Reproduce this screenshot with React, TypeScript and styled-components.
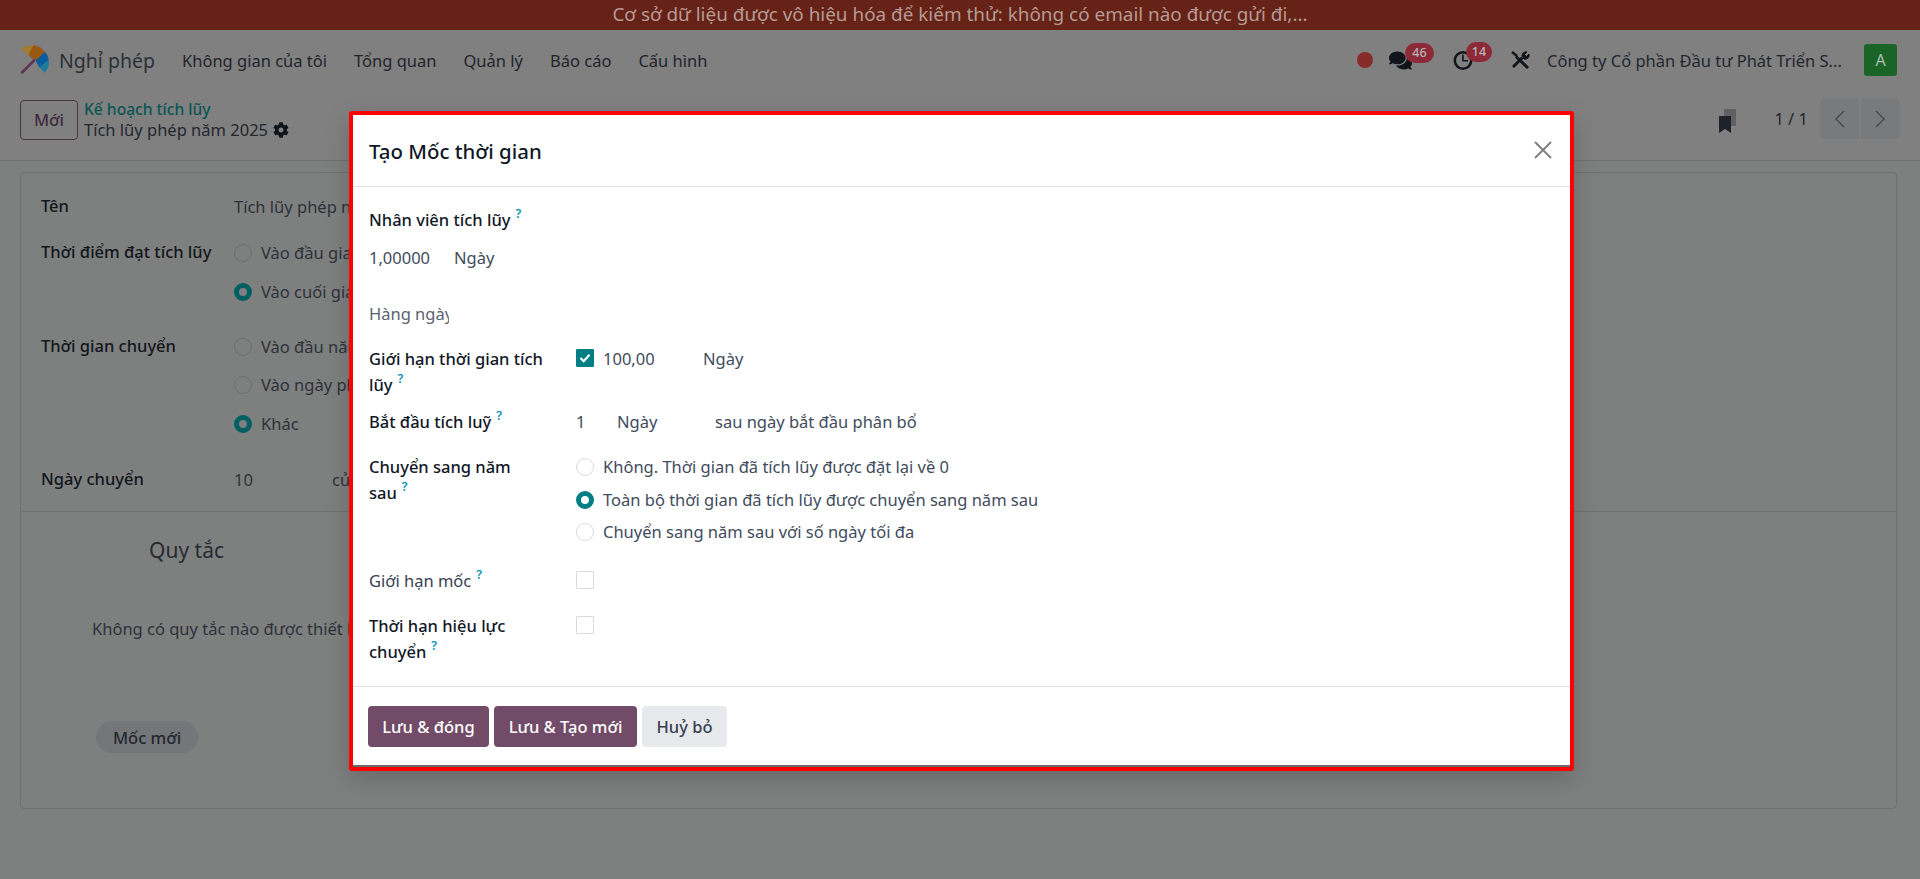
import React from "react";
import styled, { createGlobalStyle } from "styled-components";
import { FaComments, FaCog } from "react-icons/fa";

const Global = createGlobalStyle`
  html, body { margin: 0; padding: 0; height: 100%; overflow: hidden; }
  body { font-family: "Noto Sans", "Open Sans", sans-serif; font-size: 16.5px; background: #7e7f7f; color: #1f242b; }
  * { box-sizing: border-box; }
`;

const Page = styled.div`position: relative; width: 1920px; height: 879px; overflow: hidden;`;
const Banner = styled.div`
  height: 30px; background: #662216; color: #b59b93; font-size: 18.9px; line-height: 28px; text-align: center;
`;
const Navbar = styled.nav`display: flex; align-items: center; height: 60px; padding: 0 23px 0 20px; background: #808080;`;
const LogoSvg = styled.svg`width: 30px; height: 30px; flex: none; margin-bottom: 1px;`;
const Brand = styled.span`font-size: 19.5px; margin: 0 27px 0 9px; color: #2b3037;`;
const MenuItem = styled.span`margin-right: 27px; color: #1f242b;`;
const RightGroup = styled.div`display: flex; align-items: center; margin-left: auto;`;
const Dot = styled.span`width: 16px; height: 16px; border-radius: 50%; background: #872a2a;`;
const IconWrap = styled.span<{ $ml: number; $w: number }>`
  position: relative; display: flex; margin-left: ${(p) => p.$ml}px; width: ${(p) => p.$w}px; color: #10151c; font-size: ${(p) => p.$w}px;
`;
const Badge = styled.span<{ $left: number; $w: number; $top: number }>`
  position: absolute; top: ${(p) => p.$top}px; left: ${(p) => p.$left}px; width: ${(p) => p.$w}px; height: 20px; border-radius: 10px;
  background: #8c2a37; color: #b9b4b5; font-size: 12.5px; font-weight: 500; line-height: 20px; text-align: center;
`;
const Company = styled.span`margin-left: 17px; width: 294px; white-space: nowrap; color: #22272e;`;
const Avatar = styled.span`
  display: flex; align-items: center; justify-content: center; margin-left: 23px; width: 33px; height: 32px; border-radius: 3px;
  background: #1b6428; color: #b4bcb4; font-size: 16px;
`;

const ControlPanel = styled.div`
  display: flex; align-items: center; height: 71px; padding: 0 20px 11px; border-bottom: 1px solid #6e6f6f; background: #808080;
`;
const NewButton = styled.span`
  display: flex; align-items: center; justify-content: center; width: 58px; height: 40px; border: 1px solid #4c3548; border-radius: 4px; color: #3f2a3b; font-weight: 500;
`;
const Bread = styled.div`margin-left: 6px; display: flex; flex-direction: column;`;
const BreadLink = styled.span`font-size: 15.6px; font-weight: 500; line-height: 20px; color: #0a5554;`;
const BreadTitle = styled.span`display: flex; align-items: center; gap: 5px; font-size: 16.5px; line-height: 21px; color: #22272e; svg { color: #10151c; font-size: 16px; }`;
const Pager = styled.div`display: flex; align-items: center; margin: 0 0 2px auto;`;
const BookmarkSvg = styled.svg`width: 17px; height: 24px; margin: 4px 38px 0 0;`;
const PagerText = styled.span`margin-right: 12px; color: #20252c;`;
const PagerBtn = styled.span<{ $first?: boolean }>`
  display: flex; align-items: center; justify-content: center; width: 39px; height: 41px; background: #797a7c; margin-left: ${(p) => (p.$first ? 0 : 2)}px;
  border-radius: ${(p) => (p.$first ? "4px 0 0 4px" : "0 4px 4px 0")};
`;
const Sheet = styled.section`
  margin: 11px 23px 0 20px; height: 637px; border: 1px solid #707171; border-radius: 4px; padding-top: 21px;
`;
const SheetRow = styled.div<{ $top?: number }>`
  display: grid; grid-template-columns: 193px 1fr; padding-left: 20px; margin-top: ${(p) => p.$top || 0}px; line-height: 26px;
`;
const SheetLabel = styled.span`margin-top: -1px; font-weight: 500; color: #12161c;`;
const SheetValue = styled.span`color: #2d3239;`;
const OptionList = styled.div`display: flex; flex-direction: column; gap: 12.7px;`;
const Option = styled.label`display: flex; align-items: center; gap: 9px; color: inherit; white-space: nowrap;`;
const SheetOption = styled(Option)`color: #2d3239;`;
const Radio = styled.span<{ $on?: boolean; $dim?: boolean }>`
  flex: none; width: 18px; height: 18px; border-radius: 50%;
  background: ${(p) => (p.$on ? (p.$dim ? "#808080" : "#fff") : "transparent")};
  border: ${(p) => (p.$on ? `5.5px solid ${p.$dim ? "#005f60" : "#017e84"}` : `1px solid ${p.$dim ? "#6d6e6e" : "#d8dadd"}`)};
`;
const Value10 = styled.div`display: flex; color: #2d3239;`;
const Value10Num = styled.span`width: 98px;`;
const Divider = styled.hr`margin: 18px 0 0; border: 0; border-top: 1px solid #6e6f6f;`;
const RulesTitle = styled.h3`margin: 23px 0 0 128px; font-size: 21px; font-weight: 400; line-height: 30px; color: #262b32;`;
const EmptyText = styled.p`margin: 51px 0 0 71px; line-height: 26px; color: #2d3239; white-space: nowrap;`;
const PillButton = styled.span`
  display: inline-flex; align-items: center; justify-content: center; margin: 79px 0 0 75px; width: 102px; height: 32px; border-radius: 16px; background: #747679; color: #22272e; font-weight: 500;
`;

const Modal = styled.div`
  position: absolute; left: 349px; top: 111px; width: 1225px; height: 660px; border: 4px solid #ff0000; border-radius: 3px; background: #6a6a6a;
  box-shadow: 0 8px 24px rgba(0,0,0,.18);
`;
const ModalInner = styled.div`height: 650px; background: #fff; color: #414b5c;`;
const ModalHeader = styled.header`
  position: relative; display: flex; align-items: center; height: 72px; padding: 0 16px; border-bottom: 1px solid #dee2e6;
`;
const ModalTitle = styled.h4`margin: 0; font-size: 20.4px; font-weight: 500; color: #111827;`;
const CloseSvg = styled.svg`position: absolute; right: 18px; top: 26px; width: 18px; height: 18px;`;
const ModalBody = styled.div`padding: 20px 16px 0; height: 499px; line-height: 26px;`;
const Strong = styled.span`font-weight: 500; color: #111827;`;
const Light = styled.span`font-weight: 400; color: #374151;`;
const NoWrap = styled.span`white-space: nowrap;`;
const Hint = styled.sup`
  display: inline-block; margin-left: 5px; font-size: 12.5px; font-weight: 600; color: #0b94b8; line-height: 1; vertical-align: 8px;
`;
const Inline = styled.div<{ $top?: number }>`display: flex; margin-top: ${(p) => p.$top || 0}px;`;
const Fixed = styled.span<{ $w: number }>`width: ${(p) => p.$w}px; flex: none; white-space: nowrap;`;
const CheckValue = styled(Fixed)`margin-left: 9px;`;
const Clipped = styled.div`margin-top: 30px; width: 80px; height: 26px; overflow: hidden; white-space: nowrap; color: #5a6270;`;
const FormRow = styled.div<{ $top: number }>`display: grid; grid-template-columns: 207px 1fr; margin-top: ${(p) => p.$top}px;`;
const FormLabel = styled.div`width: 180px;`;
const Check = styled.span<{ $on?: boolean }>`
  flex: none; display: flex; align-items: center; justify-content: center; width: 18px; height: 18px; margin-top: 3px; border-radius: 1px;
  background: ${(p) => (p.$on ? "#017e84" : "#fff")}; border: 1px solid ${(p) => (p.$on ? "#017e84" : "#d8dadd")};
`;
const ModalOptions = styled.div`display: flex; flex-direction: column; gap: 6.5px;`;
const ModalFooter = styled.footer`
  display: flex; gap: 5px; height: 79px; padding: 19px 15px 0; border-top: 1px solid #dee2e6;
`;
const Btn = styled.button<{ $w: number; $primary?: boolean }>`
  width: ${(p) => p.$w}px; height: 41px; padding: 0; border: 0; border-radius: 4px; font: 500 16.5px "Noto Sans", sans-serif;
  background: ${(p) => (p.$primary ? "#714b67" : "#e7e9ed")}; color: ${(p) => (p.$primary ? "#fff" : "#374151")};
`;

const Logo = () => (
  <LogoSvg viewBox="0 0 30 30">
    <path d="M1 3.7Q7 0 13.3.3L8.5 10.5Z" fill="#a07a2e" />
    <path d="M13.3.3Q20 1 25 7L15.5 15.5 8.5 10.5Z" fill="#99570f" />
    <path d="M25 7Q28 10 28.7 15L19.5 22.5 15.5 15.5Z" fill="#0a5a9c" />
    <path d="M28.7 15Q30 21 25 27.7L19.5 22.5Z" fill="#1a7c9c" />
    <path d="M2 27.5L14 15.5" stroke="#5f3557" strokeWidth="2.6" strokeLinecap="round" />
  </LogoSvg>
);

const Chevron = ({ left }: { left?: boolean }) => (
  <svg width="11" height="18" viewBox="0 0 11 18" fill="none" stroke="#4a4a4c" strokeWidth="1.5">
    <path d={left ? "M10 1L2 9l8 8" : "M1 1l8 8-8 8"} />
  </svg>
);

const Tick = () => (
  <svg width="12" height="10" viewBox="0 0 12 10" fill="none" stroke="#fff" strokeWidth="2.2">
    <path d="M1.5 5l3.2 3.2L10.5 1.8" />
  </svg>
);

const Clock = () => (
  <svg width="20" height="20" viewBox="0 0 20 20" fill="none" stroke="#10151c">
    <circle cx="10" cy="10.5" r="8.2" strokeWidth="2.6" />
    <path d="M10 4.5v6.2h5" strokeWidth="1.6" />
  </svg>
);

const Tools = () => (
  <svg width="19" height="18" viewBox="0 0 19 18" fill="none" stroke="#10151c">
    <path d="M5 5.5L17 17" strokeWidth="3" />
    <path d="M1 1l5 4" strokeWidth="2.4" />
    <path d="M11.5 6.5L2 16" strokeWidth="3" />
    <path d="M11 4.5a4 4 0 0 1 5-3.5l-2.5 2.5 2 2L18 3a4 4 0 0 1-5 5z" fill="#10151c" strokeWidth="1" />
  </svg>
);

export default function App() {
  return (
    <Page>
      <Global />
      <Banner>Cơ sở dữ liệu được vô hiệu hóa để kiểm thử: không có email nào được gửi đi,...</Banner>
      <Navbar>
        <Logo />
        <Brand>Nghỉ phép</Brand>
        <MenuItem>Không gian của tôi</MenuItem>
        <MenuItem>Tổng quan</MenuItem>
        <MenuItem>Quản lý</MenuItem>
        <MenuItem>Báo cáo</MenuItem>
        <MenuItem>Cấu hình</MenuItem>
        <RightGroup>
          <Dot />
          <IconWrap $ml={16} $w={23}>
            <FaComments />
            <Badge $top={-6} $left={16} $w={29}>46</Badge>
          </IconWrap>
          <IconWrap $ml={41} $w={20}>
            <Clock />
            <Badge $top={-8} $left={13} $w={26}>14</Badge>
          </IconWrap>
          <IconWrap $ml={38} $w={19}>
            <Tools />
          </IconWrap>
          <Company>Công ty Cổ phần Đầu tư Phát Triển S...</Company>
          <Avatar>A</Avatar>
        </RightGroup>
      </Navbar>
      <ControlPanel>
        <NewButton>Mới</NewButton>
        <Bread>
          <BreadLink>Kế hoạch tích lũy</BreadLink>
          <BreadTitle>Tích lũy phép năm 2025 <FaCog /></BreadTitle>
        </Bread>
        <Pager>
          <BookmarkSvg viewBox="0 0 17 24">
            <path d="M5 0h12v17H5z" fill="#5f6062" />
            <path d="M0 7h12v17l-6-4-6 4z" fill="#1e232b" />
          </BookmarkSvg>
          <PagerText>1 / 1</PagerText>
          <PagerBtn $first><Chevron left /></PagerBtn>
          <PagerBtn><Chevron /></PagerBtn>
        </Pager>
      </ControlPanel>
      <Sheet>
        <SheetRow>
          <SheetLabel>Tên</SheetLabel>
          <SheetValue>Tích lũy phép năm 2025</SheetValue>
        </SheetRow>
        <SheetRow $top={20}>
          <SheetLabel>Thời điểm đạt tích lũy</SheetLabel>
          <OptionList>
            <SheetOption><Radio $dim />Vào đầu giai đoạn</SheetOption>
            <SheetOption><Radio $dim $on />Vào cuối giai đoạn</SheetOption>
          </OptionList>
        </SheetRow>
        <SheetRow $top={29}>
          <SheetLabel>Thời gian chuyển</SheetLabel>
          <OptionList>
            <SheetOption><Radio $dim />Vào đầu năm</SheetOption>
            <SheetOption><Radio $dim />Vào ngày phân bổ</SheetOption>
            <SheetOption><Radio $dim $on />Khác</SheetOption>
          </OptionList>
        </SheetRow>
        <SheetRow $top={30}>
          <SheetLabel>Ngày chuyển</SheetLabel>
          <Value10><Value10Num>10</Value10Num>của tháng</Value10>
        </SheetRow>
        <Divider />
        <RulesTitle>Quy tắc</RulesTitle>
        <EmptyText>Không có quy tắc nào được thiết lập</EmptyText>
        <PillButton>Mốc mới</PillButton>
      </Sheet>
      <Modal>
        <ModalInner>
          <ModalHeader>
            <ModalTitle>Tạo Mốc thời gian</ModalTitle>
            <CloseSvg viewBox="0 0 18 18" stroke="#808080" strokeWidth="2">
              <path d="M1 1l16 16M17 1L1 17" />
            </CloseSvg>
          </ModalHeader>
          <ModalBody>
            <Strong>Nhân viên tích lũy<Hint>?</Hint></Strong>
            <Inline $top={12}><Fixed $w={85}>1,00000</Fixed><span>Ngày</span></Inline>
            <Clipped>Hàng ngày</Clipped>
            <FormRow $top={19}>
              <FormLabel><Strong>Giới hạn thời gian tích <NoWrap>lũy<Hint>?</Hint></NoWrap></Strong></FormLabel>
              <Inline>
                <Check $on><Tick /></Check>
                <CheckValue $w={100}>100,00</CheckValue>
                <span>Ngày</span>
              </Inline>
            </FormRow>
            <FormRow $top={11}>
              <FormLabel><Strong>Bắt đầu tích luỹ<Hint>?</Hint></Strong></FormLabel>
              <Inline>
                <Fixed $w={41}>1</Fixed>
                <Fixed $w={98}>Ngày</Fixed>
                <span>sau ngày bắt đầu phân bổ</span>
              </Inline>
            </FormRow>
            <FormRow $top={19}>
              <FormLabel><Strong>Chuyển sang năm <NoWrap>sau<Hint>?</Hint></NoWrap></Strong></FormLabel>
              <ModalOptions>
                <Option><Radio />Không. Thời gian đã tích lũy được đặt lại về 0</Option>
                <Option><Radio $on />Toàn bộ thời gian đã tích lũy được chuyển sang năm sau</Option>
                <Option><Radio />Chuyển sang năm sau với số ngày tối đa</Option>
              </ModalOptions>
            </FormRow>
            <FormRow $top={23}>
              <FormLabel><Light>Giới hạn mốc<Hint>?</Hint></Light></FormLabel>
              <Inline><Check /></Inline>
            </FormRow>
            <FormRow $top={19}>
              <FormLabel><Strong>Thời hạn hiệu lực <NoWrap>chuyển<Hint>?</Hint></NoWrap></Strong></FormLabel>
              <Inline><Check /></Inline>
            </FormRow>
          </ModalBody>
          <ModalFooter>
            <Btn $primary $w={121}>Lưu &amp; đóng</Btn>
            <Btn $primary $w={143}>Lưu &amp; Tạo mới</Btn>
            <Btn $w={85}>Huỷ bỏ</Btn>
          </ModalFooter>
        </ModalInner>
      </Modal>
    </Page>
  );
}
